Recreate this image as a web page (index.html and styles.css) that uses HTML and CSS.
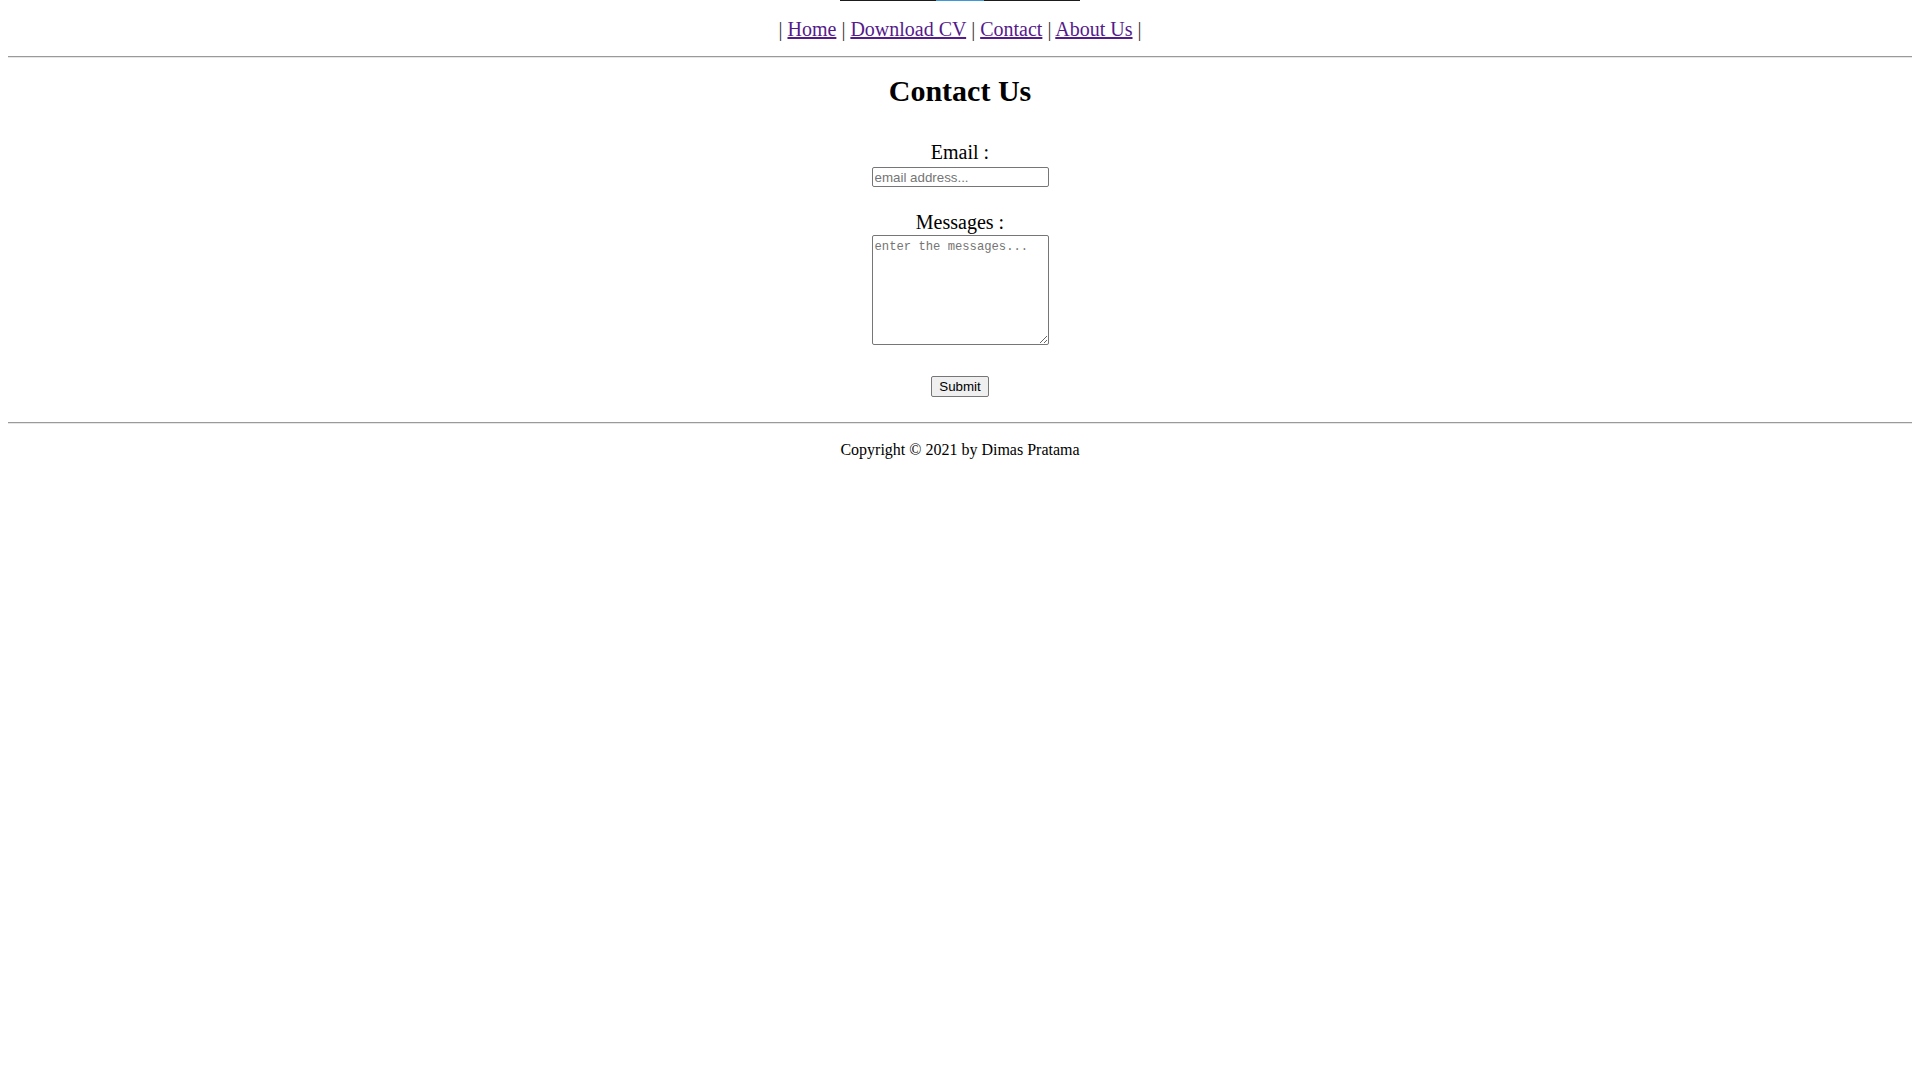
FILE: index.html
```html
<!DOCTYPE html>
<html lang="en">
<head>
<meta charset="utf-8">
<title>Contact Us</title>
<link rel="stylesheet" href="styles.css">
</head>
<body>
<div class="banner-edge"></div>
<nav class="nav">| <a href="#">Home</a> | <a href="#">Download CV</a> | <a href="#">Contact</a> | <a href="#">About Us</a> |</nav>
<hr class="rule">
<main class="content">
  <h2 class="title">Contact Us</h2>
  <form class="form">
    <label class="label label-email" for="email">Email :</label>
    <input class="field" id="email" type="text" placeholder="email address...">
    <label class="label label-msg" for="msg">Messages :</label>
    <textarea class="area" id="msg" placeholder="enter the messages..."></textarea>
    <button class="submit" type="button">Submit</button>
  </form>
</main>
<hr class="rule">
<footer class="footer">Copyright © 2021 by Dimas Pratama</footer>
</body>
</html>
```
FILE: styles.css
```css
html, body {
  background: #ffffff;
}
body {
  margin: 0 8px;
  font-family: "Liberation Serif", "Times New Roman", serif;
  color: #000;
}
.banner-edge {
  width: 240px;
  height: 1px;
  margin: 0 auto;
  background: linear-gradient(to right, #1b1b1b 0, #1b1b1b 96px, #3d9ad6 96px, #3d9ad6 144px, #1b1b1b 144px, #1b1b1b 240px);
}
.nav {
  margin: 17px 0 15px;
  font-size: 20px;
  line-height: 23px;
  text-align: center;
  color: #333;
}
.nav a {
  color: #551a8b;
  text-decoration: underline;
}
.rule {
  margin: 0;
  height: 0;
  border: 0;
  border-top: 1px solid #9a9a9a;
  border-bottom: 1px solid #e6e6e6;
}
.content {
  display: flex;
  flex-direction: column;
  align-items: center;
}
.title {
  margin: 16px 0 0;
  font-size: 30px;
  line-height: 34px;
  font-weight: bold;
}
.form {
  display: flex;
  flex-direction: column;
  align-items: center;
}
.label {
  display: block;
  font-size: 20px;
  line-height: 23px;
}
.label-email {
  margin-top: 33px;
}
.label-msg {
  margin-top: 24px;
}
.field {
  box-sizing: border-box;
  width: 177px;
  height: 20px;
  margin: 3px 0 0;
  padding: 1px 2px;
  border: 1px solid #767676;
  border-radius: 2px;
  font-family: "Liberation Sans", Arial, sans-serif;
  font-size: 13.33px;
}
.field::placeholder {
  color: #757575;
}
.area {
  box-sizing: border-box;
  width: 177px;
  height: 110px;
  margin: 1px 0 0;
  padding: 4px 2px 2px;
  border: 1px solid #767676;
  border-radius: 2px;
  font-family: "Liberation Mono", "Courier New", monospace;
  font-size: 12.2px;
  line-height: 15px;
  resize: both;
}
.area::placeholder {
  color: #757575;
}
.submit {
  box-sizing: border-box;
  height: 21px;
  margin: 31px 0 25px;
  padding: 1px 7px;
  background: #efefef;
  border: 1px solid #767676;
  border-radius: 2px;
  font-family: "Liberation Sans", Arial, sans-serif;
  font-size: 13.33px;
  color: #000;
}
.footer {
  margin-top: 17px;
  font-size: 16px;
  line-height: 18px;
  text-align: center;
}
```
